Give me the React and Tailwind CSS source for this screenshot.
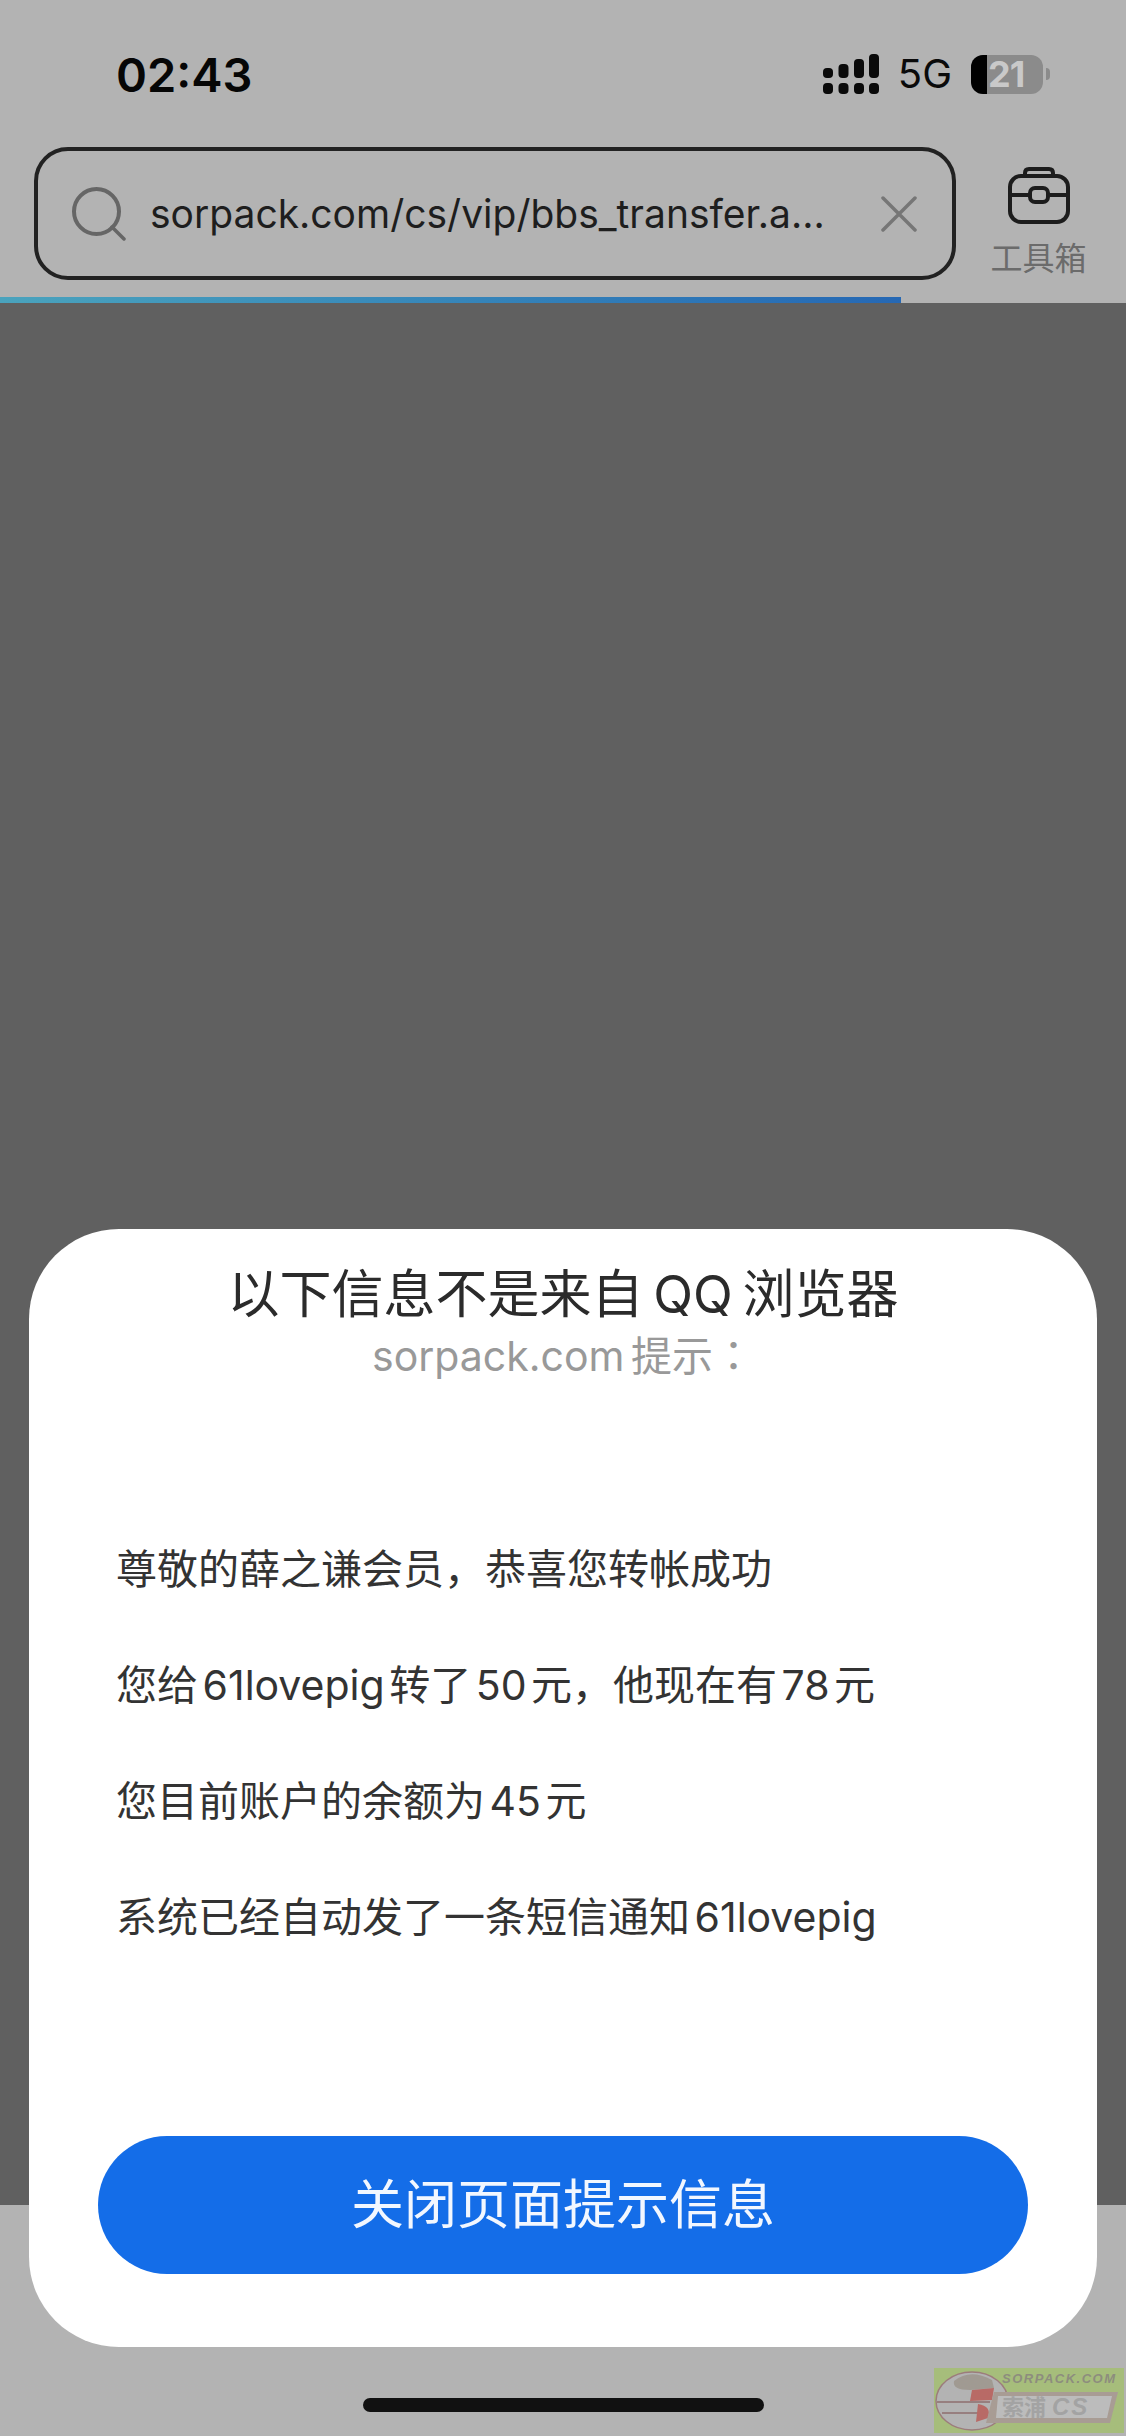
const FONT = "font-['Inter','Noto_Sans_CJK_SC',sans-serif]";

const MESSAGE_LINES = [
  "尊敬的薛之谦会员，恭喜您转帐成功",
  "您给 61lovepig 转了 50 元，他现在有 78 元",
  "您目前账户的余额为 45 元",
  "系统已经自动发了一条短信通知 61lovepig",
];

function SignalIcon() {
  return (
    <svg width="56" height="40" viewBox="0 0 56 40" fill="#0a0a0a">
      <rect x="0" y="14" width="10" height="10" rx="4" />
      <rect x="15.5" y="10" width="10" height="14" rx="4" />
      <rect x="31" y="5" width="10" height="19" rx="4" />
      <rect x="46" y="0" width="10" height="24" rx="4" />
      <rect x="0" y="29" width="10" height="11" rx="4" />
      <rect x="15.5" y="29" width="10" height="11" rx="4" />
      <rect x="31" y="29" width="10" height="11" rx="4" />
      <rect x="46" y="29" width="10" height="11" rx="4" />
    </svg>
  );
}

function Battery() {
  return (
    <div className="flex items-center">
      <div className="flex h-[39px] w-[72px] items-center rounded-[12px] bg-[#8b8b8b]">
        <div className="h-full w-[16px] rounded-l-[12px] bg-black" />
        <span className="ml-[1px] text-[36px] leading-[39px] font-bold tracking-[-1px] text-[#c9c9c9]">21</span>
      </div>
      <div className="ml-[3px] h-[12px] w-[4px] rounded-r-full bg-[#8b8b8b]" />
    </div>
  );
}

function SearchIcon() {
  return (
    <svg width="54" height="54" viewBox="0 0 54 54" fill="none" stroke="#666" strokeLinecap="round">
      <circle cx="24.5" cy="24.5" r="22.5" strokeWidth="4" />
      <path d="M40 40 L52 52" strokeWidth="3.5" />
    </svg>
  );
}

function CloseIcon() {
  return (
    <svg width="36" height="36" viewBox="0 0 36 36" fill="none" stroke="#767676" strokeWidth="3.5" strokeLinecap="round">
      <path d="M2 2 L34 34 M34 2 L2 34" />
    </svg>
  );
}

function ToolboxIcon() {
  return (
    <svg width="66" height="60" viewBox="0 0 66 60" fill="none" stroke="#1c1c1c" strokeWidth="4">
      <rect x="4" y="10" width="58" height="46" rx="11" />
      <path d="M19 10 V7 Q19 3 23 3 H43 Q47 3 47 7 V10" />
      <path d="M4 29 H24 M42 29 H62" />
      <rect x="24" y="22" width="18" height="14" rx="5" />
    </svg>
  );
}

// blurry site stamp in the corner
function Watermark() {
  return (
    <svg width="190" height="65" viewBox="0 0 190 65" className="absolute right-[2px] bottom-[3px]">
      <rect width="190" height="65" fill="#a6bd7b" />
      <ellipse cx="38" cy="33" rx="36" ry="29" fill="#b3b3b3" />
      <ellipse cx="38" cy="33" rx="36" ry="29" fill="none" stroke="#9c7c7c" strokeWidth="1.5" />
      <path d="M20 13 Q36 0 58 12 L60 20 L36 22 Q18 22 20 13 Z" fill="#a09a92" />
      <path d="M38 22 L60 20 L58 32 L36 33 Z" fill="#b86a66" />
      <path d="M3 34 H56 M8 45 H44" stroke="#8f6f6f" strokeWidth="1.5" />
      <path d="M44 36 Q58 38 54 50 L42 54 Z" fill="#b86a66" />
      <path d="M60 24 H184 L176 55 H52 Z" fill="#a89c94" />
      <path d="M64 28 H178 L173 50 H62 Z" fill="#bcbcbc" />
      <text x="68" y="15" fontSize="13" fontStyle="italic" fontWeight="700" fill="#8d8d7e" letterSpacing="1.5" fontFamily="Liberation Sans, sans-serif">
        SORPACK.COM
      </text>
      <text x="68" y="47" fontSize="22" fontWeight="700" fill="#a3a3a3" fontFamily="Noto Sans CJK SC, sans-serif">
        索浦
      </text>
      <text x="118" y="47" fontSize="24" fontStyle="italic" fontWeight="700" fill="#a3a3a3" letterSpacing="2" fontFamily="Liberation Sans, sans-serif">
        CS
      </text>
    </svg>
  );
}

export default function App() {
  return (
    <div className={`relative flex h-[2436px] w-[1126px] flex-col overflow-hidden bg-[#b3b3b3] ${FONT}`}>
      <div className="flex h-[147px] items-start justify-between pt-[55px] pr-[76px] pl-[116px]">
        <span className="text-[47px] leading-[40px] font-semibold text-[#060606]">02:43</span>
        <div className="-mt-[1px] flex items-center">
          <SignalIcon />
          <span className="mr-[19px] ml-[19px] text-[40px] leading-[40px] text-[#0a0a0a]">5G</span>
          <Battery />
        </div>
      </div>

      <div className="flex h-[150px] items-start pl-[34px]">
        <div className="flex h-[133px] w-[922px] items-center rounded-[34px] border-[4px] border-[#222] pr-[35px] pl-[34px]">
          <SearchIcon />
          <span className="ml-[24px] flex-1 text-[39px] leading-none whitespace-nowrap text-[#1e1e1e]">
            sorpack.com/cs/vip/bbs_transfer.a...
          </span>
          <CloseIcon />
        </div>
        <div className="ml-[36px] flex w-[93px] flex-col items-center pt-[19px]">
          <ToolboxIcon />
          <span className="mt-[17px] text-[32px] leading-[31px] whitespace-nowrap text-[#6b6b6b]">工具箱</span>
        </div>
      </div>

      <div className="h-[6px] w-[901px] bg-gradient-to-r from-[#4aa3bd] to-[#2668b4]" />
      <div className="h-[1902px] bg-[#606060]" />

      <div className="absolute top-[1229px] left-[29px] flex h-[1118px] w-[1068px] flex-col rounded-[90px] bg-white">
        <h1 className="mt-[34px] text-center text-[52px] leading-[64px] font-normal text-[#2b2b2b] [word-spacing:-5px]">
          以下信息不是来自 QQ 浏览器
        </h1>
        <p className="-mt-[1px] text-center text-[41px] leading-[54px] text-[#999] [word-spacing:-5px]">
          sorpack.com 提示<span className="font-['Noto_Sans_CJK_TC',sans-serif]">：</span>
        </p>
        <div className="mt-[156px] flex flex-col gap-[56px] pl-[87px]">
          {MESSAGE_LINES.map((line) => (
            <p key={line} className="text-[41px] leading-[60px] whitespace-nowrap text-[#333] [word-spacing:-7px]">
              {line}
            </p>
          ))}
        </div>
        <button className="mx-auto mt-auto mb-[73px] h-[138px] w-[930px] rounded-full bg-[#146de8] pt-[2px] text-[53px] text-[#f2f7ff]">
          关闭页面提示信息
        </button>
      </div>

      <div className="absolute top-[2398px] left-[363px] h-[14px] w-[401px] rounded-full bg-[#111]" />
      <Watermark />
    </div>
  );
}
